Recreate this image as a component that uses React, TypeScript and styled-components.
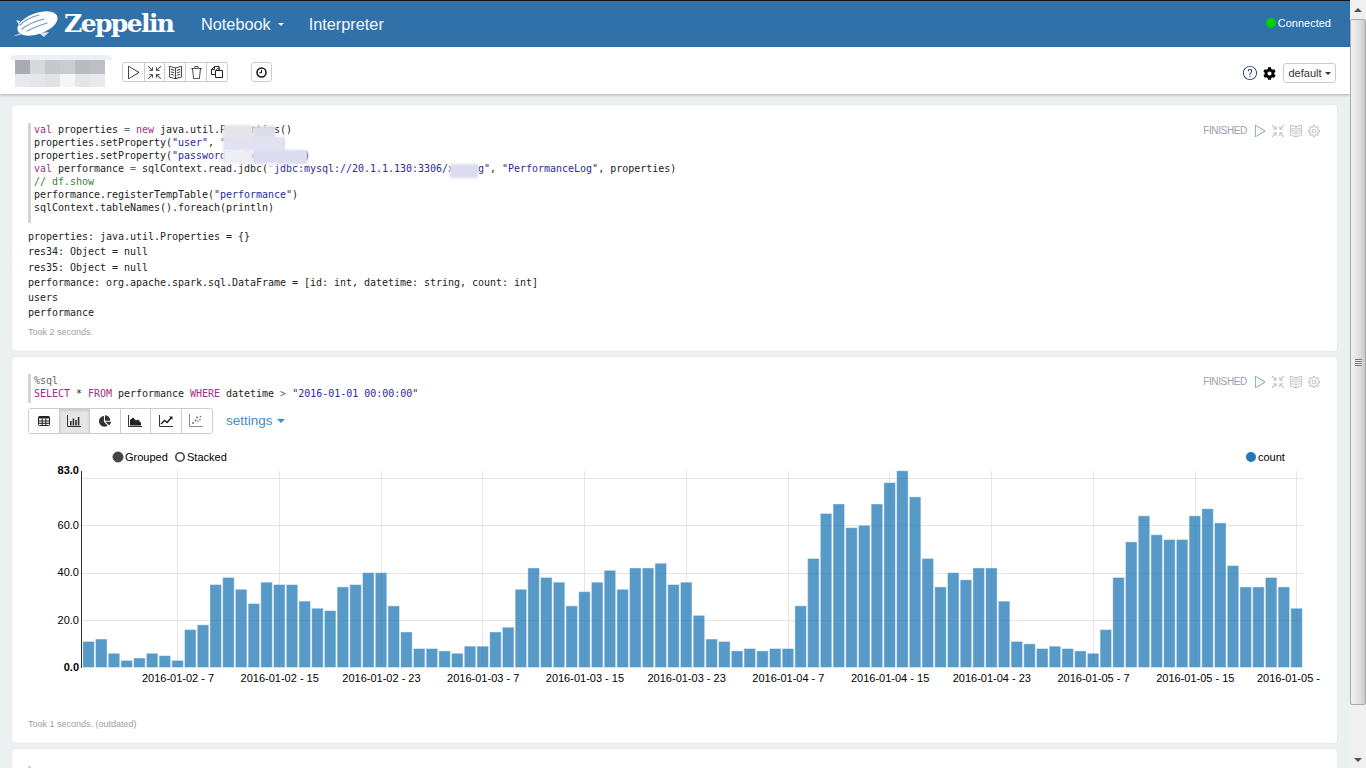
import React from 'react';
import styled, { createGlobalStyle } from 'styled-components';
import { SlControlPlay, SlSizeActual, SlBookOpen, SlTrash, SlQuestion, SlSettings } from 'react-icons/sl';
import { FaCog, FaChartPie } from 'react-icons/fa';

const Global = createGlobalStyle`
  html, body { margin: 0; padding: 0; height: 100%; overflow: hidden; }
  body { font-family: "Liberation Sans", Arial, sans-serif; background: #ecf0f1; color: #333; }
  * { box-sizing: border-box; }
`;

const Page = styled.div`display: flex; height: 768px; width: 1366px; overflow: hidden;`;
const Main = styled.div`width: 1350px; height: 768px; overflow: hidden; display: flex; flex-direction: column; background: #ecf0f1;`;

const Navbar = styled.header`
  height: 47px; flex: none; background: #3071a9; border-top: 1px solid #111; display: flex; align-items: center; padding: 0 19px 0 13px; color: #fff;
`;
const Brand = styled.div`display: flex; align-items: center; width: 188px; flex: none;`;
const BrandName = styled.span`font-family: "DejaVu Serif", serif; font-weight: 700; font-size: 25px; letter-spacing: -1.6px; margin-left: 5px; line-height: 46px;`;
const NavItem = styled.span`font-size: 16.3px; margin-right: 25px; display: flex; align-items: center; color: #f4f7fa;`;
const Caret = styled.i`display: inline-block; width: 0; height: 0; border-left: ${p => p.$s ?? 3.5}px solid transparent; border-right: ${p => p.$s ?? 3.5}px solid transparent; border-top: ${p => p.$s ?? 3.5}px solid currentColor; margin-left: ${p => p.$gap ?? 7}px;`;
const Connected = styled.div`margin-left: auto; margin-top: -2px; display: flex; align-items: center; font-size: 11px; gap: 2px;`;
const Dot = styled.i`width: 10px; height: 10px; border-radius: 50%; background: #00d000;`;

const ActionBar = styled.div`
  height: 47px; flex: none; background: #fff; display: flex; align-items: flex-start; padding: 13px 14px 0 15px; box-shadow: 0 1px 3px rgba(0,0,0,.28); position: relative; z-index: 2;
`;
const Mosaic = styled.div`display: grid; grid-template-columns: repeat(6, 15px); grid-auto-rows: 13.5px; width: 90px; position: relative;
  &::before { content: ""; position: absolute; left: -5px; right: -7px; top: -5px; height: 5px; background: #edf0f3; border-radius: 6px 6px 0 0; }
`;
const Tile = styled.i`background: ${p => p.$c};`;
const Group = styled.div`display: flex; height: 20px; margin: ${p => p.$m}; border: 1px solid #ccc; border-radius: 3px; background: #fff;`;
const GroupBtn = styled.span`width: ${p => p.$w}px; display: flex; align-items: center; justify-content: center; font-size: 13px; color: #222; & + & { border-left: 1px solid #ccc; }`;
const Right = styled.div`margin-left: auto; margin-top: 3px; display: flex; align-items: center; color: #222;`;
const Question = styled.span`font-size: 14px; display: flex; margin-right: 6px; color: #1f3550;`;
const Gear = styled.span`font-size: 13px; display: flex; color: #000; margin-right: 7px;`;
const Select = styled.span`width: 53px; height: 20px; border: 1px solid #ccc; border-radius: 3px; font-size: 11px; display: flex; align-items: center; justify-content: center; color: #333; background: #fff;`;

const Content = styled.div`padding: 11px 13px 0 12px; display: flex; flex-direction: column; gap: 6px;`;
const Card = styled.section`background: #fff; border-radius: 3px; position: relative; padding: ${p => p.$top}px 16px 14px; box-shadow: 0 0 1px rgba(0,0,0,.18); flex: none;`;
const Status = styled.div`position: absolute; right: 17px; top: ${p => p.$top}px; display: flex; align-items: center; color: #9aa0ad; font-size: 10px; letter-spacing: -0.35px; line-height: 14px;`;
const StatusIcon = styled.span`display: flex; font-size: 12px; width: 12px; margin-left: ${p => p.$ml ?? 6}px; color: ${p => p.$c ?? '#aab2b8'};`;
const Code = styled.pre`margin: 0 0 ${p => p.$gap}px; padding: 0 0 ${p => p.$pad}px 3px; border-left: 3px solid #d4d4d4; font-family: "DejaVu Sans Mono", monospace; font-size: 10px; letter-spacing: -0.02px; line-height: 13px; color: #222; position: relative; height: ${p => p.$h}px; white-space: pre;`;
const Kw = styled.span`color: #a0308a;`;
const Str = styled.span`color: #2a2a9a;`;
const Com = styled.span`color: #3f7f3f;`;
const Op = styled.span`color: #666;`;
const Blur = styled.i`position: absolute; left: ${p => p.$x}px; top: ${p => p.$y}px; width: ${p => p.$w}px; height: ${p => p.$h}px; background: ${p => p.$c}; filter: blur(1px);`;
const Output = styled.pre`margin: 0; padding-top: 1px; font-family: "DejaVu Sans Mono", monospace; font-size: 10px; letter-spacing: -0.02px; line-height: 15.3px; color: #222; white-space: pre;`;
const Took = styled.div`font-size: 9px; line-height: 12px; color: #a0a0a0; margin: ${p => p.$mt}px 0 -1px;`;

const ChartBar = styled.div`display: flex; align-items: center; height: 26px;`;
const ChartGroup = styled.div`display: flex; height: 26px; border: 1px solid #ccc; border-radius: 3px; width: 185px; padding-right: 1px; overflow: hidden;`;
const ChartBtn = styled.span`flex: 1; display: flex; align-items: center; justify-content: center; font-size: 12px; color: #333; background: ${p => p.$on ? '#e6e6e6' : '#fff'}; box-shadow: ${p => p.$on ? 'inset 0 2px 3px rgba(0,0,0,.12)' : 'none'}; & + & { border-left: 1px solid #ccc; }`;
const Settings = styled.span`margin-left: 13px; font-size: 13.5px; color: #428bca; display: flex; align-items: center;`;
const ChartSvg = styled.svg`display: block; overflow: hidden;`;

const mosaic = ['#a8acb2','#d6d8dc','#c5c8cc','#c9ccd0','#b8bbc0','#bcbfc3','#e8e9ec','#e6e7ea','#e0e2e5','#f5f5f5','#e4e5e8','#e8e9eb'];
const values = [11,12,6,3,4,6,5,3,16,18,35,38,33,27,36,35,35,28,25,24,34,35,40,40,26,15,8,8,7,6,9,9,15,17,33,42,38,36,26,32,36,41,33,42,42,44,35,36,22,12,11,7,8,7,8,8,26,46,65,69,59,60,69,78,83,72,46,34,40,37,42,42,28,11,10,8,9,8,7,6,16,38,53,64,56,54,54,64,67,61,43,34,34,38,34,25];
const labels: string[] = [];
['02','03','04','05'].forEach((d) => [7,15,23].forEach((h) => labels.push(`2016-01-${d} - ${h}`)));
const Y0 = 667.5, K = 2.37, STEP = 12.716, TICK = 101.73;

const Logo = () => (
  <svg width="46" height="28" viewBox="0 0 46 28">
    <ellipse cx="24.5" cy="13.5" rx="21" ry="10.5" transform="rotate(-20 24.5 13.5)" fill="#fff" />
    <path d="M0 26.5 L6 23.5 L8 24.5 Z M3 10 L7 11 L6 15 Z M26 23 L31 27 L36 22 Z" fill="#d8e4ef" />
    <g stroke="#6f9cc2" strokeWidth="1.2" fill="none" strokeLinecap="round">
      <path d="M7 15 C12 10 18 7 26 5" />
      <path d="M9 19 C15 14 23 11 31 9" />
      <path d="M14 21 C20 18 27 15 34 13" />
    </g>
  </svg>
);

const CopyIcon = () => (
  <svg width="14" height="14" viewBox="0 0 14 14" fill="none" stroke="#222" strokeWidth="1">
    <path d="M6.5 9.5H1.5V4.5L4.5 1.5H9V5" />
    <path d="M1.5 4.5H4.5V1.5" />
    <path d="M5.5 5.5H12.5V12.5H5.5Z" fill="#fff" />
    <path d="M9 5.5V2M5.5 5.5L8.5 2.5" strokeWidth=".8" />
  </svg>
);
const TableIcon = () => (
  <svg width="12" height="10" viewBox="0 0 12 10" fill="none" stroke="#222" strokeWidth="1">
    <rect x=".5" y=".5" width="11" height="9" rx="1" />
    <path d="M.5 1.5H11.5" strokeWidth="2" />
    <path d="M.5 5H11.5M.5 7.3H11.5M4.2 2.5V9.5M7.8 2.5V9.5" />
  </svg>
);
const BarsIcon = () => (
  <svg width="14" height="12" viewBox="0 0 14 12" fill="none">
    <path d="M.5 0V11.5H14" stroke="#333" />
    <path d="M3 6H4.6V10.5H3ZM5.6 3.5H7.2V10.5H5.6ZM8.2 5H9.8V10.5H8.2ZM10.8 2H12.4V10.5H10.8Z" fill="#333" />
  </svg>
);
const AreaIcon = () => (
  <svg width="14" height="12" viewBox="0 0 14 12" fill="none">
    <path d="M.5 0V11.5H14" stroke="#333" />
    <path d="M2 10.5V5L5 2.5L8 5.5L10 4.5L13 8V10.5Z" fill="#222" />
  </svg>
);
const LineIcon = () => (
  <svg width="14" height="12" viewBox="0 0 14 12" fill="none">
    <path d="M.5 0V11.5H14" stroke="#333" />
    <path d="M2 9L5.5 5.5L8 7.5L12.5 2.5" stroke="#222" strokeWidth="1.5" />
    <path d="M10 1.5H13.5V5Z" fill="#222" />
  </svg>
);
const Scatter = () => (
  <svg width="14" height="13" viewBox="0 0 14 13" fill="none" stroke="#8a8a8a">
    <path d="M.5 0V12.5H14" strokeWidth="1" />
    <g fill="#666" stroke="none"><circle cx="4" cy="9" r=".9" /><circle cx="6.5" cy="6.5" r=".9" /><circle cx="9" cy="7" r=".8" /><circle cx="8" cy="3.5" r=".9" /><circle cx="11.5" cy="2.5" r=".8" /><circle cx="11" cy="5.5" r=".8" /></g>
  </svg>
);

const ParaStatus = ({ top }: { top: number }) => (
  <Status $top={top}>
    FINISHED
    <StatusIcon $c="#6d8fc9" $ml={7}><SlControlPlay /></StatusIcon>
    <StatusIcon><SlSizeActual /></StatusIcon>
    <StatusIcon><SlBookOpen /></StatusIcon>
    <StatusIcon><SlSettings /></StatusIcon>
  </Status>
);

export default function App() {
  return (
    <Page>
      <Global />
      <Main>
        <Navbar>
          <Brand><Logo /><BrandName>Zeppelin</BrandName></Brand>
          <NavItem>Notebook<Caret /></NavItem>
          <NavItem>Interpreter</NavItem>
          <Connected><Dot />Connected</Connected>
        </Navbar>
        <ActionBar>
          <Mosaic>{mosaic.map((c, i) => <Tile key={i} $c={c} />)}</Mosaic>
          <Group $m="2px 0 0 17px">
            <GroupBtn $w={21}><SlControlPlay /></GroupBtn>
            <GroupBtn $w={20}><SlSizeActual /></GroupBtn>
            <GroupBtn $w={21}><SlBookOpen /></GroupBtn>
            <GroupBtn $w={21}><SlTrash /></GroupBtn>
            <GroupBtn $w={21}><CopyIcon /></GroupBtn>
          </Group>
          <Group $m="2px 0 0 23px">
            <GroupBtn $w={19}>
              <svg width="11" height="11" viewBox="0 0 11 11" fill="none" stroke="#111"><circle cx="5.5" cy="5.5" r="4.5" strokeWidth="1.5" /><path d="M5.5 2.8V5.8H3.2" strokeWidth="1" /></svg>
            </GroupBtn>
          </Group>
          <Right>
            <Question><SlQuestion /></Question>
            <Gear><FaCog /></Gear>
            <Select>default<Caret $gap={3} /></Select>
          </Right>
        </ActionBar>
        <Content>
          <Card $top={18}>
            <ParaStatus top={19} />
            <Code $gap={5} $pad={9} $h={100}>
              <Kw>val</Kw> properties <Op>=</Op> <Kw>new</Kw> java.util.Properties(){'\n'}
              properties.setProperty(<Str>"user"</Str>, <Str>"xxxxxxxx"</Str>){'\n'}
              properties.setProperty(<Str>"password"</Str>, <Str>"xxxxxxxx"</Str>){'\n'}
              <Kw>val</Kw> performance <Op>=</Op> sqlContext.read.jdbc(<Str>"jdbc:mysql://20.1.1.130:3306/xxxxxg"</Str>, <Str>"PerformanceLog"</Str>, properties){'\n'}
              <Com>// df.show</Com>{'\n'}
              performance.registerTempTable(<Str>"performance"</Str>){'\n'}
              sqlContext.tableNames().foreach(println)
              <Blur $x={192} $y={2} $w={30} $h={14} $c="#e6e6ea" />
              <Blur $x={192} $y={14} $w={62} $h={14} $c="#e2e2f2" />
              <Blur $x={222} $y={3} $w={22} $h={12} $c="#dcdcea" />
              <Blur $x={222} $y={27} $w={54} $h={14} $c="#dcdcf0" />
              <Blur $x={192} $y={27} $w={30} $h={14} $c="#eeeef6" />
              <Blur $x={236} $y={40} $w={10} $h={4} $c="#f4f4fa" />
              <Blur $x={419} $y={41} $w={28} $h={14} $c="#dcdcf0" />
            </Code>
            <Output>{`properties: java.util.Properties = {}
res34: Object = null
res35: Object = null
performance: org.apache.spark.sql.DataFrame = [id: int, datetime: string, count: int]
users
performance`}</Output>
            <Took $mt={5}>Took 2 seconds.</Took>
          </Card>
          <Card $top={17}>
            <ParaStatus top={18} />
            <Code $gap={5} $pad={3} $h={29}>
              <Op>%sql</Op>{'\n'}
              <Kw>SELECT</Kw> * <Kw>FROM</Kw> performance <Kw>WHERE</Kw> datetime <Op>&gt;</Op> <Str>"2016-01-01 00:00:00"</Str>
            </Code>
            <ChartBar>
              <ChartGroup>
                <ChartBtn><TableIcon /></ChartBtn>
                <ChartBtn $on><BarsIcon /></ChartBtn>
                <ChartBtn><FaChartPie /></ChartBtn>
                <ChartBtn><AreaIcon /></ChartBtn>
                <ChartBtn><LineIcon /></ChartBtn>
                <ChartBtn><Scatter /></ChartBtn>
              </ChartGroup>
              <Settings>settings<Caret $gap={4} $s={4.5} /></Settings>
            </ChartBar>
            <ChartSvg width="1294" height="256" viewBox="28 434 1294 256" fontFamily="Liberation Sans, Arial, sans-serif" fontSize="11">
              <circle cx="118" cy="457" r="5" fill="#444" stroke="#444" />
              <text x="125" y="461" fill="#000">Grouped</text>
              <circle cx="180" cy="457" r="4.2" fill="#fff" stroke="#444" strokeWidth="1.6" />
              <text x="187" y="461" fill="#000">Stacked</text>
              <circle cx="1251" cy="457" r="5" fill="#1f77b4" />
              <text x="1258" y="461" fill="#000">count</text>
              <g stroke="#e5e5e5" strokeWidth="1">
                {[80, 60, 40, 20].map((v) => <line key={v} x1="81" x2="1303" y1={Math.round(Y0 - v * K) + 0.5} y2={Math.round(Y0 - v * K) + 0.5} />)}
                {labels.map((_, i) => <line key={i} x1={Math.round(177.3 + i * TICK) + 0.5} x2={Math.round(177.3 + i * TICK) + 0.5} y1="471" y2="668" />)}
              </g>
              <g>
                {values.map((v, i) => (
                  <rect key={i} x={82.8 + i * STEP} y={Y0 - v * K} width={11.5} height={v * K} fill="#1f77b4" fillOpacity=".75" stroke="#fff" strokeOpacity=".4" strokeWidth="1" />
                ))}
              </g>
              <line x1="81.5" x2="81.5" y1="471" y2="668" stroke="#333" />
              <g textAnchor="end" fill="#000">
                <text x="79" y="474" fontWeight="700">83.0</text>
                <text x="79" y="529">60.0</text>
                <text x="79" y="576">40.0</text>
                <text x="79" y="624">20.0</text>
                <text x="79" y="671" fontWeight="700">0.0</text>
              </g>
              <g textAnchor="middle" fill="#000">
                {labels.slice(0, 11).map((l, i) => <text key={l} x={178 + i * TICK} y="682">{l}</text>)}
              </g>
              <text x="1257" y="682" fill="#000">2016-01-05 -</text>
            </ChartSvg>
            <Took $mt={28}>Took 1 seconds. (outdated)</Took>
          </Card>
          <Card $top={17}>
            <ParaStatus top={18} />
            <Code $gap={0} $pad={3} $h={29} />
          </Card>
        </Content>
      </Main>
      <Scrollbar />
    </Page>
  );
}

const Track = styled.div`width: 16px; height: 768px; background: #f0f0f0; display: flex; flex-direction: column; align-items: stretch; flex: none;`;
const ArrowBox = styled.div`height: ${p => p.$h}px; display: flex; align-items: center; justify-content: center; flex: none;`;
const ArrowUp = styled.i`width: 0; height: 0; border-left: 4px solid transparent; border-right: 4px solid transparent; border-bottom: 4px solid #505050;`;
const ArrowDown = styled.i`width: 0; height: 0; border-left: 4px solid transparent; border-right: 4px solid transparent; border-top: 4px solid #505050;`;
const Thumb = styled.div`height: 686px; flex: none; border: 1px solid #a8a8a8; border-radius: 2px; background: linear-gradient(90deg, #f2f2f2, #dcdcdc 70%, #c8c8c8); display: flex; align-items: center; justify-content: center;`;
const Spacer = styled.div`flex: 1;`;
const Grip = styled.i`width: 7px; height: 7px; background: repeating-linear-gradient(0deg, #777 0 1px, #eee 1px 2px);`;
function Scrollbar() {
  return (
    <Track>
      <ArrowBox $h={19}><ArrowUp /></ArrowBox>
      <Thumb><Grip /></Thumb>
      <Spacer />
      <ArrowBox $h={17}><ArrowDown /></ArrowBox>
    </Track>
  );
}
